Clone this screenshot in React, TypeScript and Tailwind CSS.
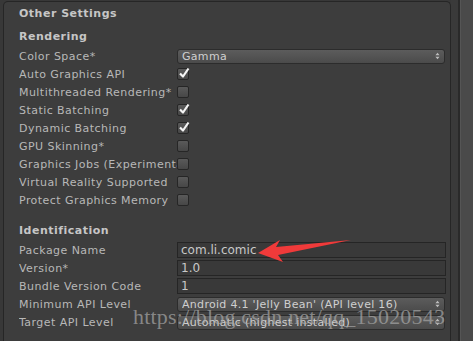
import React from 'react';

const font = { fontFamily: '"DejaVu Sans", Verdana, sans-serif' };

function Check({ on }: { on?: boolean }) {
  return (
    <div className="relative w-[12px] h-[12px] rounded-[2px] border border-[#262626] bg-gradient-to-b from-[#5a5a5a] to-[#474747]">
      {on && (
        <svg viewBox="0 0 12 12" className="absolute left-[0px] top-[-2px] w-[12px] h-[12px]">
          <path d="M2 6.5 L5 9.5 L10.5 1.5" fill="none" stroke="#f4f4f4" strokeWidth="2.2" strokeLinejoin="round" />
        </svg>
      )}
    </div>
  );
}

function Popup({ text }: { text: string }) {
  return (
    <div className="flex items-center justify-between h-[15px] w-[268px] rounded-[3px] border border-[#2c2c2c] bg-gradient-to-b from-[#5c5c5c] to-[#4b4b4b] pl-[4px] pr-[4px] text-[11px] text-[#cfcfcf] tracking-[0.3px]">
      <span className="leading-none truncate">{text}</span>
      <svg viewBox="0 0 6 9" className="w-[5px] h-[8px] shrink-0">
        <path d="M0.5 3.5 L3 0.5 L5.5 3.5 Z M0.5 5.5 L3 8.5 L5.5 5.5 Z" fill="#bdbdbd" />
      </svg>
    </div>
  );
}

function Field({ text }: { text: string }) {
  return (
    <div className="flex items-center h-[16px] w-[269px] border border-[#252525] bg-[#393939] px-[3px] text-[12px] text-[#c8c8c8]">
      <span className="leading-none">{text}</span>
    </div>
  );
}

function Row({ label, children }: { label: string; children?: React.ReactNode }) {
  return (
    <div className="flex items-center h-[18px]">
      <div className="w-[158px] shrink-0 overflow-hidden whitespace-nowrap text-[11px] text-[#b8b8b8] tracking-[0.45px] leading-none">
        {label}
      </div>
      <div className="flex items-center">{children}</div>
    </div>
  );
}

function Header({ text, className }: { text: string; className?: string }) {
  return (
    <div className={`flex items-center h-[18px] text-[11px] font-bold text-[#c6c6c6] tracking-[0.5px] ${className ?? ''}`}>
      {text}
    </div>
  );
}

export default function App() {
  return (
    <div className="relative w-[473px] h-[341px] overflow-hidden bg-[#383838] flex" style={font}>
      <div className="ml-[3px] mt-[1px] w-[448px] h-[360px] rounded-t-[5px] border-l border-t border-r border-[#262626] bg-[#3d3d3d] pl-[15px] pt-[3px]">
        <Header text="Other Settings" />
        <Header text="Rendering" className="mt-[5px]" />
        <div className="mt-[1px] flex flex-col">
          <Row label="Color Space*">
            <Popup text="Gamma" />
          </Row>
          <Row label="Auto Graphics API"><Check on /></Row>
          <Row label="Multithreaded Rendering*"><Check /></Row>
          <Row label="Static Batching"><Check on /></Row>
          <Row label="Dynamic Batching"><Check on /></Row>
          <Row label="GPU Skinning*"><Check /></Row>
          <Row label="Graphics Jobs (Experimental)"><Check /></Row>
          <Row label="Virtual Reality Supported"><Check /></Row>
          <Row label="Protect Graphics Memory"><Check /></Row>
        </div>
        <Header text="Identification" className="mt-[13px]" />
        <div className="mt-[1px] flex flex-col">
          <Row label="Package Name"><Field text="com.li.comic" /></Row>
          <Row label="Version*"><Field text="1.0" /></Row>
          <Row label="Bundle Version Code"><Field text="1" /></Row>
          <Row label="Minimum API Level">
            <Popup text="Android 4.1 'Jelly Bean' (API level 16)" />
          </Row>
          <Row label="Target API Level">
            <Popup text="Automatic (highest installed)" />
          </Row>
        </div>
      </div>
      <div className="w-[7px] h-full bg-[#3a3a3a]" />
      <div className="w-[2px] h-full bg-[#2a2a2a]" />
      <div className="flex-1 h-full bg-[#4a4a4a] border-l border-[#555555]" />

      <svg className="absolute left-0 top-0" width="473" height="341" viewBox="0 0 473 341">
        <path d="M351 240 L276 247 L280 240 L258 253 L283 262 L278 255 Z" fill="#f03a3a" />
      </svg>
      <div
        className="absolute left-[133px] top-[306px] text-[22px] text-[#a8a8a8]/70 whitespace-nowrap leading-none tracking-[0.2px]"
        style={{ fontFamily: '"Liberation Serif", "Times New Roman", serif' }}
      >
        https://blog.csdn.net/qq_15020543
      </div>
    </div>
  );
}
